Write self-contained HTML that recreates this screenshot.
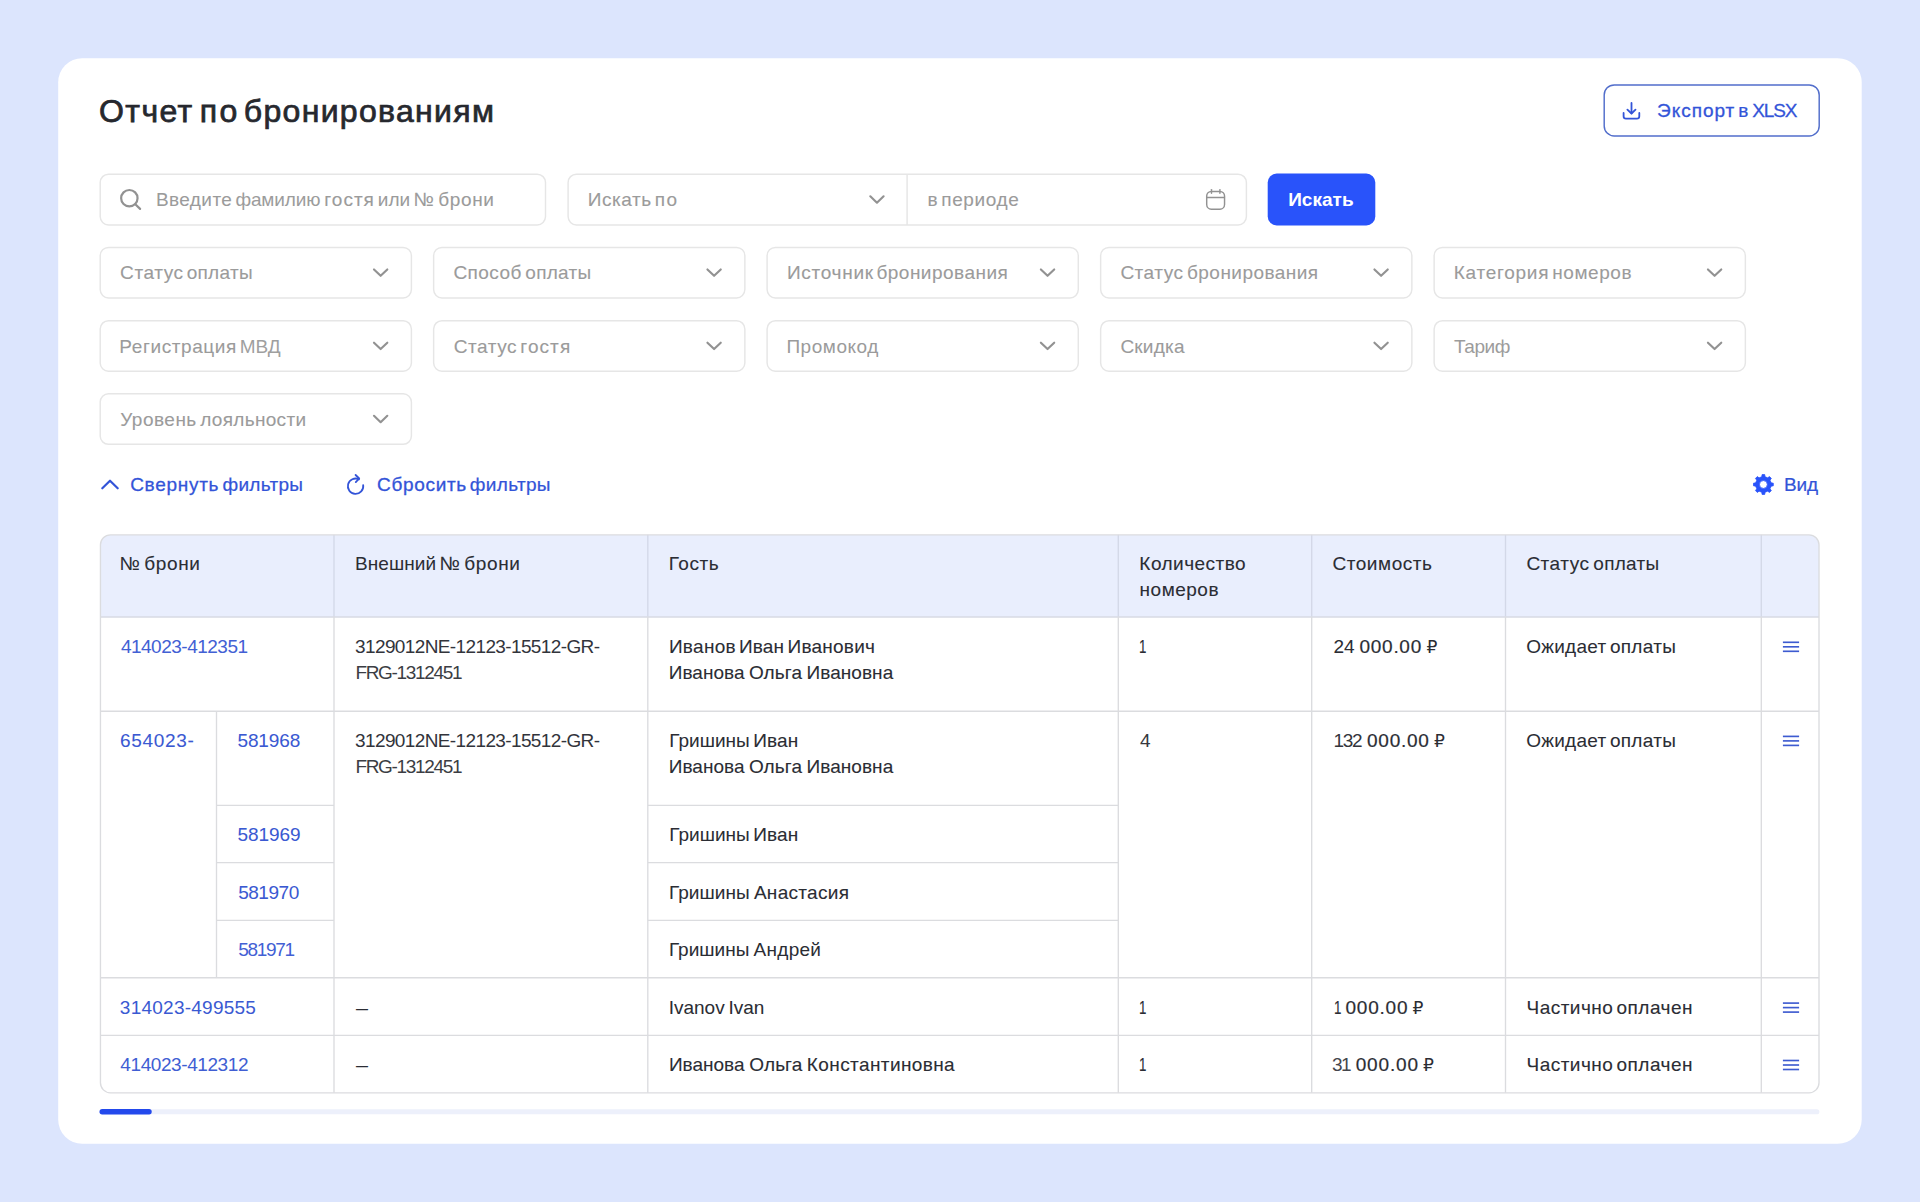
<!DOCTYPE html>
<html lang="ru">
<head>
<meta charset="utf-8">
<title>Отчет по бронированиям</title>
<style>
html,body{margin:0;padding:0}
body{width:1920px;height:1202px;position:relative;overflow:hidden;background:#dce5fd;font-family:"Liberation Sans","DejaVu Sans",sans-serif;color:#2b2d34}
#bg{position:absolute;left:0;top:0;width:1920px;height:1202px;display:block}
h1,button,.w{all:unset;display:block;position:static;width:0;height:0;margin:0;padding:0;border:0;background:none;font:inherit;color:inherit}
.t{position:absolute;display:block;white-space:pre;line-height:1;font-weight:400;font-size:19px;transform-origin:0 50%;-webkit-text-stroke:0.1px currentColor}
.sb{-webkit-text-stroke:0.3px currentColor}
.b{font-weight:700;-webkit-text-stroke:0}
.h{font-size:32px;-webkit-text-stroke:0.72px currentColor}
.rub{font-family:"DejaVu Sans",sans-serif;-webkit-text-stroke:0}
</style>
</head>
<body>
<svg id="bg" width="1920" height="1202" viewBox="0 0 1920 1202" aria-hidden="true">
<rect x="58.2" y="58.2" width="1803.5" height="1085.6" rx="24" fill="#ffffff"/>
<rect x="1604.2" y="84.9" width="215.0" height="51.1" rx="10" fill="#fff" stroke="#526ecb" stroke-width="1.45"/>
<g fill="none" stroke="#3354d8" stroke-width="1.8" stroke-linecap="round" stroke-linejoin="round"><path d="M1631.5 102.9 V113.3"/><path d="M1627.4 109.6 L1631.5 113.5 L1635.5 109.6"/><path d="M1623.6 112.9 V116.2 Q1623.6 118.6 1626 118.6 H1636.9 Q1639.3 118.6 1639.3 116.2 V112.9"/></g>
<rect x="100.2" y="174.2" width="445.3" height="50.7" rx="8.3" fill="#fff" stroke="#e6e6e6" stroke-width="1.45"/>
<g fill="none" stroke="#929292" stroke-width="2.2" stroke-linecap="round"><circle cx="129.35" cy="198.2" r="8.2"/><path d="M135.3 204.2 L140.1 208.9"/></g>
<rect x="568.1" y="174.2" width="678.3" height="50.7" rx="8.3" fill="#fff" stroke="#e6e6e6" stroke-width="1.45"/>
<line x1="907.1" y1="174.2" x2="907.1" y2="224.9" stroke="#e6e6e6" stroke-width="1.45"/>
<path d="M870.3 196.3 L876.95 202.7 L883.6 196.3" fill="none" stroke="#929292" stroke-width="2.15" stroke-linecap="round" stroke-linejoin="round"/>
<g fill="none" stroke="#929292" stroke-width="1.45" stroke-linecap="round"><rect x="1206.7" y="191.45" width="17.85" height="17.75" rx="4.6"/><path d="M1206.9 197.5 H1224.4"/><path d="M1211.5 189.6 V193.3"/><path d="M1219.9 189.6 V193.3"/></g>
<rect x="1267.7" y="173.6" width="107.6" height="51.9" rx="9" fill="#2953fa"/>
<rect x="100.2" y="247.4" width="311.2" height="50.5" rx="8.3" fill="#fff" stroke="#e6e6e6" stroke-width="1.45"/>
<path d="M374 269.4 L380.65 275.8 L387.3 269.4" fill="none" stroke="#929292" stroke-width="2.15" stroke-linecap="round" stroke-linejoin="round"/>
<rect x="433.65" y="247.4" width="311.2" height="50.5" rx="8.3" fill="#fff" stroke="#e6e6e6" stroke-width="1.45"/>
<path d="M707.45 269.4 L714.1 275.8 L720.75 269.4" fill="none" stroke="#929292" stroke-width="2.15" stroke-linecap="round" stroke-linejoin="round"/>
<rect x="767.1" y="247.4" width="311.2" height="50.5" rx="8.3" fill="#fff" stroke="#e6e6e6" stroke-width="1.45"/>
<path d="M1040.9 269.4 L1047.55 275.8 L1054.2 269.4" fill="none" stroke="#929292" stroke-width="2.15" stroke-linecap="round" stroke-linejoin="round"/>
<rect x="1100.65" y="247.4" width="311.2" height="50.5" rx="8.3" fill="#fff" stroke="#e6e6e6" stroke-width="1.45"/>
<path d="M1374.45 269.4 L1381.1 275.8 L1387.75 269.4" fill="none" stroke="#929292" stroke-width="2.15" stroke-linecap="round" stroke-linejoin="round"/>
<rect x="1434.15" y="247.4" width="311.2" height="50.5" rx="8.3" fill="#fff" stroke="#e6e6e6" stroke-width="1.45"/>
<path d="M1707.95 269.4 L1714.6 275.8 L1721.25 269.4" fill="none" stroke="#929292" stroke-width="2.15" stroke-linecap="round" stroke-linejoin="round"/>
<rect x="100.2" y="320.7" width="311.2" height="50.5" rx="8.3" fill="#fff" stroke="#e6e6e6" stroke-width="1.45"/>
<path d="M374 342.7 L380.65 349.1 L387.3 342.7" fill="none" stroke="#929292" stroke-width="2.15" stroke-linecap="round" stroke-linejoin="round"/>
<rect x="433.65" y="320.7" width="311.2" height="50.5" rx="8.3" fill="#fff" stroke="#e6e6e6" stroke-width="1.45"/>
<path d="M707.45 342.7 L714.1 349.1 L720.75 342.7" fill="none" stroke="#929292" stroke-width="2.15" stroke-linecap="round" stroke-linejoin="round"/>
<rect x="767.1" y="320.7" width="311.2" height="50.5" rx="8.3" fill="#fff" stroke="#e6e6e6" stroke-width="1.45"/>
<path d="M1040.9 342.7 L1047.55 349.1 L1054.2 342.7" fill="none" stroke="#929292" stroke-width="2.15" stroke-linecap="round" stroke-linejoin="round"/>
<rect x="1100.65" y="320.7" width="311.2" height="50.5" rx="8.3" fill="#fff" stroke="#e6e6e6" stroke-width="1.45"/>
<path d="M1374.45 342.7 L1381.1 349.1 L1387.75 342.7" fill="none" stroke="#929292" stroke-width="2.15" stroke-linecap="round" stroke-linejoin="round"/>
<rect x="1434.15" y="320.7" width="311.2" height="50.5" rx="8.3" fill="#fff" stroke="#e6e6e6" stroke-width="1.45"/>
<path d="M1707.95 342.7 L1714.6 349.1 L1721.25 342.7" fill="none" stroke="#929292" stroke-width="2.15" stroke-linecap="round" stroke-linejoin="round"/>
<rect x="100.2" y="393.8" width="311.2" height="50.5" rx="8.3" fill="#fff" stroke="#e6e6e6" stroke-width="1.45"/>
<path d="M374 415.8 L380.65 422.2 L387.3 415.8" fill="none" stroke="#929292" stroke-width="2.15" stroke-linecap="round" stroke-linejoin="round"/>
<path d="M102.3 488.3 L110 480.7 L117.7 488.3" fill="none" stroke="#3354d8" stroke-width="2.2" stroke-linecap="round" stroke-linejoin="round"/>
<g fill="none" stroke="#3354d8" stroke-width="1.8" stroke-linecap="round" stroke-linejoin="round"><path d="M358.93 479.33 A7.7 7.7 0 1 0 363.18 485.18"/><path d="M355.6 475.0 L359.2 478.5 L355.8 482.1"/></g>
<path d="M1761.76 476.77 L1762.09 474.59 L1764.71 474.59 L1765.04 476.77 L1767.7 477.87 L1769.49 476.57 L1771.33 478.41 L1770.03 480.2 L1771.13 482.86 L1773.31 483.19 L1773.31 485.81 L1771.13 486.14 L1770.03 488.8 L1771.33 490.59 L1769.49 492.43 L1767.7 491.13 L1765.04 492.23 L1764.71 494.41 L1762.09 494.41 L1761.76 492.23 L1759.1 491.13 L1757.31 492.43 L1755.47 490.59 L1756.77 488.8 L1755.67 486.14 L1753.49 485.81 L1753.49 483.19 L1755.67 482.86 L1756.77 480.2 L1755.47 478.41 L1757.31 476.57 L1759.1 477.87 Z M1767.35 484.5 A3.95 3.95 0 1 0 1759.45 484.5 A3.95 3.95 0 1 0 1767.35 484.5 Z" fill="#2953fa" fill-rule="evenodd" stroke="#2953fa" stroke-width="0.8" stroke-linejoin="round"/>
<defs><clipPath id="tc"><rect x="100.45" y="534.85" width="1718.55" height="557.95" rx="10"/></clipPath></defs>
<rect x="100.45" y="534.85" width="1718.55" height="82.15" fill="#e9eefd" clip-path="url(#tc)"/>
<g stroke="#dbdcdf" stroke-width="1.35" fill="none">
<line x1="100.45" y1="617" x2="1819.0" y2="617" stroke="#d7dae3"/>
<line x1="100.45" y1="711.2" x2="1819.0" y2="711.2"/>
<line x1="100.45" y1="977.7" x2="1819.0" y2="977.7"/>
<line x1="100.45" y1="1035.3" x2="1819.0" y2="1035.3"/>
<line x1="216.5" y1="805.3" x2="334" y2="805.3"/>
<line x1="647.8" y1="805.3" x2="1118.3" y2="805.3"/>
<line x1="216.5" y1="862.6" x2="334" y2="862.6"/>
<line x1="647.8" y1="862.6" x2="1118.3" y2="862.6"/>
<line x1="216.5" y1="920.3" x2="334" y2="920.3"/>
<line x1="647.8" y1="920.3" x2="1118.3" y2="920.3"/>
<line x1="334.0" y1="534.85" x2="334.0" y2="616.4" stroke="#d3d8e8"/>
<line x1="334.0" y1="616.4" x2="334.0" y2="1092.8"/>
<line x1="647.8" y1="534.85" x2="647.8" y2="616.4" stroke="#d3d8e8"/>
<line x1="647.8" y1="616.4" x2="647.8" y2="1092.8"/>
<line x1="1118.3" y1="534.85" x2="1118.3" y2="616.4" stroke="#d3d8e8"/>
<line x1="1118.3" y1="616.4" x2="1118.3" y2="1092.8"/>
<line x1="1311.7" y1="534.85" x2="1311.7" y2="616.4" stroke="#d3d8e8"/>
<line x1="1311.7" y1="616.4" x2="1311.7" y2="1092.8"/>
<line x1="1505.5" y1="534.85" x2="1505.5" y2="616.4" stroke="#d3d8e8"/>
<line x1="1505.5" y1="616.4" x2="1505.5" y2="1092.8"/>
<line x1="1761.3" y1="534.85" x2="1761.3" y2="616.4" stroke="#d3d8e8"/>
<line x1="1761.3" y1="616.4" x2="1761.3" y2="1092.8"/>
<line x1="216.5" y1="711.2" x2="216.5" y2="977.7"/>
<rect x="100.45" y="534.85" width="1718.55" height="557.95" rx="10"/>
</g>
<g stroke="#3d5bd0" stroke-width="1.65" stroke-linecap="butt">
<line x1="1782.9" y1="642.3" x2="1799.1" y2="642.3"/><line x1="1782.9" y1="646.8" x2="1799.1" y2="646.8"/><line x1="1782.9" y1="651.3" x2="1799.1" y2="651.3"/>
<line x1="1782.9" y1="736.4" x2="1799.1" y2="736.4"/><line x1="1782.9" y1="740.9" x2="1799.1" y2="740.9"/><line x1="1782.9" y1="745.4" x2="1799.1" y2="745.4"/>
<line x1="1782.9" y1="1003.1" x2="1799.1" y2="1003.1"/><line x1="1782.9" y1="1007.6" x2="1799.1" y2="1007.6"/><line x1="1782.9" y1="1012.1" x2="1799.1" y2="1012.1"/>
<line x1="1782.9" y1="1060.5" x2="1799.1" y2="1060.5"/><line x1="1782.9" y1="1065" x2="1799.1" y2="1065"/><line x1="1782.9" y1="1069.5" x2="1799.1" y2="1069.5"/>
</g>
<rect x="99.6" y="1109.2" width="1719.8" height="5.1" rx="2.55" fill="#edf0fb"/>
<rect x="99.5" y="1109.1" width="52.2" height="5.3" rx="2.65" fill="#2349ec"/>
</svg>
<main>
<header class="header">
<h1 class="w"><span class="t h" style="left:99.09px;top:95px;letter-spacing:1.395px;color:#26282e;-webkit-text-stroke-width:0.75px">Отчет </span><span class="t h" style="left:199.65px;top:95px;letter-spacing:2.620px;color:#26282e;-webkit-text-stroke-width:0.76px">по </span><span class="t h" style="left:243.85px;top:95px;letter-spacing:1.306px;color:#26282e;-webkit-text-stroke-width:0.74px">бронированиям</span></h1>
<button class="w"><span class="t sb" style="left:1657.11px;top:101px;letter-spacing:0.963px;color:#3354d8;-webkit-text-stroke-width:0.32px">Экспорт </span><span class="t sb" style="left:1738.31px;top:101px;color:#3354d8;-webkit-text-stroke-width:0.24px">в </span><span class="t sb" style="left:1752.16px;top:101px;letter-spacing:-1.066px;color:#3354d8;-webkit-text-stroke-width:0.27px">XLSX</span></button>
</header>
<form class="search">
<div class="w"><span class="t" style="left:155.89px;top:190px;letter-spacing:0.421px;color:#9b9b9b;-webkit-text-stroke-width:0.06px">Введите </span><span class="t" style="left:235.41px;top:190px;letter-spacing:-0.141px;color:#9c9c9c;-webkit-text-stroke-width:0.00px">фамилию </span><span class="t" style="left:324.34px;top:190px;letter-spacing:0.997px;color:#9b9b9b;-webkit-text-stroke-width:0.14px">гостя </span><span class="t" style="left:377.80px;top:190px;letter-spacing:0.056px;color:#9b9b9b;-webkit-text-stroke-width:0.04px">или </span><span class="t" style="left:413.42px;top:190px;color:#9b9b9b;-webkit-text-stroke-width:0.11px">№ </span><span class="t" style="left:438.35px;top:190px;letter-spacing:0.589px;color:#9b9b9b;-webkit-text-stroke-width:0.12px">брони</span></div>
<div class="w"><span class="t" style="left:587.70px;top:190px;letter-spacing:0.548px;color:#9b9b9b;-webkit-text-stroke-width:0.12px">Искать </span><span class="t" style="left:654.84px;top:190px;letter-spacing:1.430px;color:#9b9b9b;-webkit-text-stroke-width:0.13px">по</span></div>
<div class="w"><span class="t" style="left:927.58px;top:190px;color:#9b9b9b;-webkit-text-stroke-width:0.10px">в </span><span class="t" style="left:941.27px;top:190px;letter-spacing:0.600px;color:#9b9b9b;-webkit-text-stroke-width:0.09px">периоде</span></div>
<button class="w"><span class="t b" style="left:1288.17px;top:190px;letter-spacing:0.037px;color:#ffffff">Искать</span></button>
</form>
<section class="filters">
<div class="w"><span class="t" style="left:120.10px;top:263px;letter-spacing:0.571px;color:#9b9b9b;-webkit-text-stroke-width:0.13px">Статус </span><span class="t" style="left:186.66px;top:263px;letter-spacing:0.306px;color:#9b9b9b;-webkit-text-stroke-width:0.10px">оплаты</span></div>
<div class="w"><span class="t" style="left:453.38px;top:263px;letter-spacing:0.438px;color:#9b9b9b;-webkit-text-stroke-width:0.14px">Способ </span><span class="t" style="left:525.35px;top:263px;letter-spacing:0.252px;color:#9b9b9b;-webkit-text-stroke-width:0.09px">оплаты</span></div>
<div class="w"><span class="t" style="left:786.90px;top:263px;letter-spacing:0.731px;color:#9b9b9b;-webkit-text-stroke-width:0.13px">Источник </span><span class="t" style="left:876.41px;top:263px;letter-spacing:0.485px;color:#9b9b9b;-webkit-text-stroke-width:0.10px">бронирования</span></div>
<div class="w"><span class="t" style="left:1120.40px;top:263px;letter-spacing:0.494px;color:#9b9b9b;-webkit-text-stroke-width:0.12px">Статус </span><span class="t" style="left:1187.02px;top:263px;letter-spacing:0.455px;color:#9b9b9b;-webkit-text-stroke-width:0.09px">бронирования</span></div>
<div class="w"><span class="t" style="left:1453.71px;top:263px;letter-spacing:0.741px;color:#9b9b9b;-webkit-text-stroke-width:0.12px">Категория </span><span class="t" style="left:1552.27px;top:263px;letter-spacing:0.565px;color:#9b9b9b;-webkit-text-stroke-width:0.09px">номеров</span></div>
<div class="w"><span class="t" style="left:119.35px;top:337px;letter-spacing:0.590px;color:#9b9b9b;-webkit-text-stroke-width:0.08px">Регистрация </span><span class="t" style="left:239.76px;top:337px;letter-spacing:-0.004px;color:#9f9f9f;-webkit-text-stroke-width:0.00px">МВД</span></div>
<div class="w"><span class="t" style="left:453.75px;top:337px;letter-spacing:0.562px;color:#9b9b9b;-webkit-text-stroke-width:0.12px">Статус </span><span class="t" style="left:520.31px;top:337px;letter-spacing:1.075px;color:#9b9b9b;-webkit-text-stroke-width:0.13px">гостя</span></div>
<div class="w"><span class="t" style="left:786.41px;top:337px;letter-spacing:0.543px;color:#9b9b9b;-webkit-text-stroke-width:0.03px">Промокод</span></div>
<div class="w"><span class="t" style="left:1120.39px;top:337px;letter-spacing:0.214px;color:#9b9b9b;-webkit-text-stroke-width:0.09px">Скидка</span></div>
<div class="w"><span class="t" style="left:1453.97px;top:337px;letter-spacing:-0.445px;color:#9c9c9c;-webkit-text-stroke-width:0.00px">Тариф</span></div>
<div class="w"><span class="t" style="left:120.17px;top:410px;letter-spacing:0.486px;color:#9b9b9b;-webkit-text-stroke-width:0.10px">Уровень </span><span class="t" style="left:200.24px;top:410px;letter-spacing:0.308px;color:#9b9b9b;-webkit-text-stroke-width:0.10px">лояльности</span></div>
</section>
<nav class="actions">
<div class="w"><span class="t sb" style="left:130.16px;top:475px;letter-spacing:0.716px;color:#3354d8;-webkit-text-stroke-width:0.28px">Свернуть </span><span class="t sb" style="left:222.59px;top:475px;letter-spacing:0.271px;color:#3354d8;-webkit-text-stroke-width:0.24px">фильтры</span></div>
<div class="w"><span class="t sb" style="left:377.11px;top:475px;letter-spacing:0.666px;color:#3354d8;-webkit-text-stroke-width:0.32px">Сбросить </span><span class="t sb" style="left:469.87px;top:475px;letter-spacing:0.328px;color:#3354d8;-webkit-text-stroke-width:0.24px">фильтры</span></div>
<div class="w"><span class="t sb" style="left:1783.99px;top:475px;letter-spacing:-0.092px;color:#3354d8;-webkit-text-stroke-width:0.22px">Вид</span></div>
</nav>
<section class="thead">
<div class="w"><span class="t" style="left:119.48px;top:554px;-webkit-text-stroke-width:0.09px">№ </span><span class="t" style="left:144.13px;top:554px;letter-spacing:0.674px;-webkit-text-stroke-width:0.12px">брони</span></div>
<div class="w"><span class="t" style="left:354.91px;top:554px;letter-spacing:0.083px;-webkit-text-stroke-width:0.03px">Внешний </span><span class="t" style="left:439.42px;top:554px;-webkit-text-stroke-width:0.11px">№ </span><span class="t" style="left:464.35px;top:554px;letter-spacing:0.589px;-webkit-text-stroke-width:0.12px">брони</span></div>
<div class="w"><span class="t" style="left:668.70px;top:554px;letter-spacing:0.592px;-webkit-text-stroke-width:0.10px">Гость</span></div>
<div class="w"><span class="t" style="left:1139.34px;top:554px;letter-spacing:0.480px;-webkit-text-stroke-width:0.12px">Количество</span></div>
<div class="w"><span class="t" style="left:1139.58px;top:580px;letter-spacing:0.502px;-webkit-text-stroke-width:0.10px">номеров</span></div>
<div class="w"><span class="t" style="left:1332.40px;top:554px;letter-spacing:0.563px;-webkit-text-stroke-width:0.10px">Стоимость</span></div>
<div class="w"><span class="t" style="left:1526.40px;top:554px;letter-spacing:0.494px;-webkit-text-stroke-width:0.12px">Статус </span><span class="t" style="left:1593.35px;top:554px;letter-spacing:0.252px;-webkit-text-stroke-width:0.08px">оплаты</span></div>
</section>
<section class="tbody">
<div class="w"><span class="t" style="left:120.92px;top:637px;letter-spacing:-0.499px;color:#4260d4;-webkit-text-stroke-width:0.00px">414023-412351</span></div>
<div class="w"><span class="t" style="left:355.10px;top:637px;letter-spacing:-0.623px;color:#32343b;-webkit-text-stroke-width:0.00px">3129012NE-12123-15512-GR-</span></div>
<div class="w"><span class="t" style="left:355.41px;top:663px;letter-spacing:-1.332px;color:#3b3d43;-webkit-text-stroke-width:0.00px">FRG-1312451</span></div>
<div class="w"><span class="t" style="left:668.92px;top:637px;letter-spacing:0.306px;-webkit-text-stroke-width:0.09px">Иванов </span><span class="t" style="left:739.09px;top:637px;letter-spacing:0.085px;-webkit-text-stroke-width:0.10px">Иван </span><span class="t" style="left:787.49px;top:637px;letter-spacing:0.241px;-webkit-text-stroke-width:0.10px">Иванович</span></div>
<div class="w"><span class="t" style="left:668.72px;top:663px;letter-spacing:0.020px;-webkit-text-stroke-width:0.08px">Иванова </span><span class="t" style="left:748.90px;top:663px;letter-spacing:0.107px;-webkit-text-stroke-width:0.12px">Ольга </span><span class="t" style="left:806.50px;top:663px;letter-spacing:0.054px;-webkit-text-stroke-width:0.10px">Ивановна</span></div>
<div class="w"><span class="t" style="left:1138.74px;top:637px;-webkit-text-stroke-width:0.10px;transform:scaleX(0.700)">1</span></div>
<div class="w"><span class="t" style="left:1333.49px;top:637px;letter-spacing:-0.163px;-webkit-text-stroke-width:0.06px">24 </span><span class="t" style="left:1359.55px;top:637px;letter-spacing:0.711px;-webkit-text-stroke-width:0.19px">000.00 </span><span class="t rub" style="left:1426.47px;top:639px;font-size:17.10px">₽</span></div>
<div class="w"><span class="t" style="left:1526.14px;top:637px;letter-spacing:0.280px;-webkit-text-stroke-width:0.05px">Ожидает </span><span class="t" style="left:1609.91px;top:637px;letter-spacing:0.296px;-webkit-text-stroke-width:0.09px">оплаты</span></div>
<div class="w"><span class="t" style="left:120.08px;top:731px;letter-spacing:0.676px;color:#3a59d2;-webkit-text-stroke-width:0.08px">654023-</span></div>
<div class="w"><span class="t" style="left:237.46px;top:731px;letter-spacing:-0.121px;color:#3a59d2;-webkit-text-stroke-width:0.05px">581968</span></div>
<div class="w"><span class="t" style="left:355.10px;top:731px;letter-spacing:-0.623px;color:#32343b;-webkit-text-stroke-width:0.00px">3129012NE-12123-15512-GR-</span></div>
<div class="w"><span class="t" style="left:355.41px;top:757px;letter-spacing:-1.332px;color:#3b3d43;-webkit-text-stroke-width:0.00px">FRG-1312451</span></div>
<div class="w"><span class="t" style="left:669.37px;top:731px;letter-spacing:-0.022px;-webkit-text-stroke-width:0.05px">Гришины </span><span class="t" style="left:753.15px;top:731px;letter-spacing:0.139px;-webkit-text-stroke-width:0.11px">Иван</span></div>
<div class="w"><span class="t" style="left:668.72px;top:757px;letter-spacing:0.020px;-webkit-text-stroke-width:0.08px">Иванова </span><span class="t" style="left:748.90px;top:757px;letter-spacing:0.107px;-webkit-text-stroke-width:0.12px">Ольга </span><span class="t" style="left:806.50px;top:757px;letter-spacing:0.054px;-webkit-text-stroke-width:0.10px">Ивановна</span></div>
<div class="w"><span class="t" style="left:1139.92px;top:731px;color:#36383e;-webkit-text-stroke-width:0.00px">4</span></div>
<div class="w"><span class="t" style="left:1333.38px;top:731px;letter-spacing:-1.310px;color:#33353c;-webkit-text-stroke-width:0.00px">132 </span><span class="t" style="left:1367.06px;top:731px;letter-spacing:0.752px;-webkit-text-stroke-width:0.20px">000.00 </span><span class="t rub" style="left:1434.11px;top:733px;font-size:17.10px">₽</span></div>
<div class="w"><span class="t" style="left:1526.14px;top:731px;letter-spacing:0.280px;-webkit-text-stroke-width:0.05px">Ожидает </span><span class="t" style="left:1609.91px;top:731px;letter-spacing:0.296px;-webkit-text-stroke-width:0.09px">оплаты</span></div>
<div class="w"><span class="t" style="left:237.45px;top:825px;letter-spacing:-0.076px;color:#3a59d2;-webkit-text-stroke-width:0.04px">581969</span></div>
<div class="w"><span class="t" style="left:669.37px;top:825px;letter-spacing:-0.022px;-webkit-text-stroke-width:0.05px">Гришины </span><span class="t" style="left:753.15px;top:825px;letter-spacing:0.139px;-webkit-text-stroke-width:0.11px">Иван</span></div>
<div class="w"><span class="t" style="left:238.16px;top:883px;letter-spacing:-0.464px;color:#3a59d2;-webkit-text-stroke-width:0.04px">581970</span></div>
<div class="w"><span class="t" style="left:668.89px;top:883px;letter-spacing:0.076px;-webkit-text-stroke-width:0.06px">Гришины </span><span class="t" style="left:753.92px;top:883px;letter-spacing:0.294px;-webkit-text-stroke-width:0.10px">Анастасия</span></div>
<div class="w"><span class="t" style="left:238.32px;top:940px;letter-spacing:-1.318px;color:#4260d4;-webkit-text-stroke-width:0.00px">581971</span></div>
<div class="w"><span class="t" style="left:668.89px;top:940px;letter-spacing:0.025px;-webkit-text-stroke-width:0.06px">Гришины </span><span class="t" style="left:753.55px;top:940px;letter-spacing:0.282px;-webkit-text-stroke-width:0.03px">Андрей</span></div>
<div class="w"><span class="t" style="left:119.86px;top:998px;letter-spacing:0.246px;color:#3a59d2;-webkit-text-stroke-width:0.01px">314023-499555</span></div>
<div class="w"><span class="t" style="left:356.34px;top:998px;-webkit-text-stroke-width:0.15px;transform:scaleX(0.630)">—</span></div>
<div class="w"><span class="t" style="left:668.63px;top:998px;letter-spacing:0.008px;-webkit-text-stroke-width:0.04px">Ivanov </span><span class="t" style="left:728.57px;top:998px;letter-spacing:-0.021px;-webkit-text-stroke-width:0.06px">Ivan</span></div>
<div class="w"><span class="t" style="left:1138.74px;top:998px;-webkit-text-stroke-width:0.10px;transform:scaleX(0.700)">1</span></div>
<div class="w"><span class="t" style="left:1334.07px;top:998px;-webkit-text-stroke-width:0.14px;transform:scaleX(0.700)">1 </span><span class="t" style="left:1345.55px;top:998px;letter-spacing:0.757px;-webkit-text-stroke-width:0.19px">000.00 </span><span class="t rub" style="left:1412.47px;top:1000px;font-size:17.10px">₽</span></div>
<div class="w"><span class="t" style="left:1526.47px;top:998px;letter-spacing:0.493px;-webkit-text-stroke-width:0.11px">Частично </span><span class="t" style="left:1616.39px;top:998px;letter-spacing:0.524px;-webkit-text-stroke-width:0.13px">оплачен</span></div>
<div class="w"><span class="t" style="left:120.34px;top:1055px;letter-spacing:-0.416px;color:#405ed3;-webkit-text-stroke-width:0.00px">414023-412312</span></div>
<div class="w"><span class="t" style="left:356.34px;top:1055px;-webkit-text-stroke-width:0.15px;transform:scaleX(0.630)">—</span></div>
<div class="w"><span class="t" style="left:668.92px;top:1055px;letter-spacing:-0.005px;-webkit-text-stroke-width:0.09px">Иванова </span><span class="t" style="left:749.37px;top:1055px;letter-spacing:0.061px;-webkit-text-stroke-width:0.12px">Ольга </span><span class="t" style="left:806.86px;top:1055px;letter-spacing:0.394px;-webkit-text-stroke-width:0.12px">Константиновна</span></div>
<div class="w"><span class="t" style="left:1138.74px;top:1055px;-webkit-text-stroke-width:0.10px;transform:scaleX(0.700)">1</span></div>
<div class="w"><span class="t" style="left:1331.95px;top:1055px;letter-spacing:-1.400px;color:#44464c;-webkit-text-stroke-width:0.00px">31 </span><span class="t" style="left:1355.65px;top:1055px;letter-spacing:0.865px;-webkit-text-stroke-width:0.19px">000.00 </span><span class="t rub" style="left:1423.11px;top:1057px;font-size:17.10px">₽</span></div>
<div class="w"><span class="t" style="left:1526.47px;top:1055px;letter-spacing:0.493px;-webkit-text-stroke-width:0.11px">Частично </span><span class="t" style="left:1616.39px;top:1055px;letter-spacing:0.524px;-webkit-text-stroke-width:0.13px">оплачен</span></div>
</section>
</main>
</body>
</html>
